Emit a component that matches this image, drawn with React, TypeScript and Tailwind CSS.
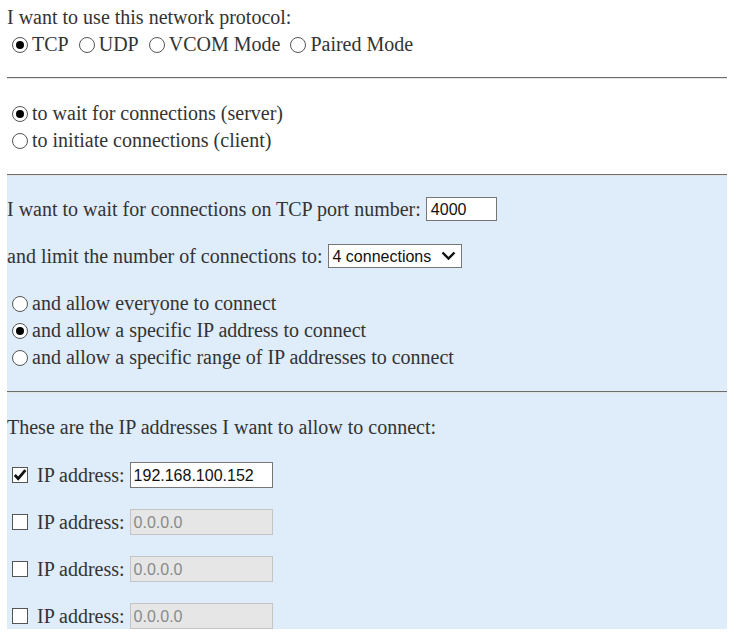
const serif = "font-['Liberation_Serif','Times_New_Roman',serif]";

const Radio = ({ checked }: { checked?: boolean }) => (
  <span className="ml-[5px] mr-[4px] flex h-[16px] w-[16px] shrink-0 items-center justify-center rounded-full border border-[#555] bg-white">
    {checked && <span className="h-[8px] w-[8px] rounded-full bg-black" />}
  </span>
);

const Checkbox = ({ checked }: { checked?: boolean }) => (
  <span className="ml-[5px] mr-[9px] flex h-[16px] w-[16px] shrink-0 items-center justify-center border border-[#555] bg-white">
    {checked && (
      <svg width="14" height="14" viewBox="0 0 14 14">
        <path d="M1.8 7 L5.2 10.6 L12.4 2.2" fill="none" stroke="#111" strokeWidth="2.8" />
      </svg>
    )}
  </span>
);

const Rule = () => <div className="border-t border-b border-t-[#6e6e6e] border-b-[#e4e4e4]" />;

const IpRow = ({ value, enabled }: { value: string; enabled?: boolean }) => (
  <div className="flex h-[26px] items-center">
    <Checkbox checked={enabled} />
    <span>IP address:</span>
    <span
      className={`ml-[5px] flex h-[26px] w-[143px] items-center px-[3px] font-['Liberation_Sans',Arial,sans-serif] text-[16px] ${
        enabled ? "border border-[#767676] bg-white text-[#111]" : "border border-[#c4c4c4] bg-[#e6e6e6] text-[#8a8a8a]"
      }`}
    >
      {value}
    </span>
  </div>
);

export default function App() {
  return (
    <div className={`${serif} bg-white px-[7px] pb-[8px] text-[20px] leading-[23px] text-[#333]`}>
      {/* protocol */}
      <div className="pt-[4px]">
        <div className="flex h-[27px] items-center">I want to use this network protocol:</div>
        <div className="flex h-[27px] items-center">
          <Radio checked />
          <span className="mr-[5px]">TCP</span>
          <Radio />
          <span className="mr-[5px]">UDP</span>
          <Radio />
          <span className="mr-[5px]">VCOM Mode</span>
          <Radio />
          <span>Paired Mode</span>
        </div>
      </div>

      <div className="mt-[19px]">
        <Rule />
      </div>

      <div className="mt-[21px]">
        <div className="flex h-[27px] items-center">
          <Radio checked />
          <span>to wait for connections (server)</span>
        </div>
        <div className="flex h-[27px] items-center">
          <Radio />
          <span>to initiate connections (client)</span>
        </div>
      </div>

      {/* server settings */}
      <div className="mt-[20px] bg-[#dfecfa]">
        <Rule />
        <div className="mt-[20px] flex h-[26px] items-center">
          <span>I want to wait for connections on TCP port number:</span>
          <span className="ml-[5px] flex h-[24px] w-[71px] items-center border border-[#767676] bg-white px-[4px] font-['Liberation_Sans',Arial,sans-serif] text-[16px] text-[#111]">
            4000
          </span>
        </div>
        <div className="mt-[21px] flex h-[26px] items-center">
          <span>and limit the number of connections to:</span>
          <span className="ml-[5px] flex h-[24px] w-[134px] items-center justify-between border border-[#767676] bg-white pl-[4px] pr-[5px] font-['Liberation_Sans',Arial,sans-serif] text-[16px] text-[#111]">
            4 connections
            <svg width="15" height="10" viewBox="0 0 15 10">
              <path d="M1.5 1.5 L7.5 7.5 L13.5 1.5" fill="none" stroke="#111" strokeWidth="2.4" />
            </svg>
          </span>
        </div>
        <div className="mt-[21px]">
          <div className="flex h-[27px] items-center">
            <Radio />
            <span>and allow everyone to connect</span>
          </div>
          <div className="flex h-[27px] items-center">
            <Radio checked />
            <span>and allow a specific IP address to connect</span>
          </div>
          <div className="flex h-[27px] items-center">
            <Radio />
            <span>and allow a specific range of IP addresses to connect</span>
          </div>
        </div>
        <div className="mt-[20px]">
          <Rule />
        </div>
        <div className="mt-[21px] flex h-[27px] items-center">These are the IP addresses I want to allow to connect:</div>
        <div className="mt-[21px] flex flex-col gap-[21px]">
          <IpRow value="192.168.100.152" enabled />
          <IpRow value="0.0.0.0" />
          <IpRow value="0.0.0.0" />
          <IpRow value="0.0.0.0" />
        </div>
      </div>
    </div>
  );
}
